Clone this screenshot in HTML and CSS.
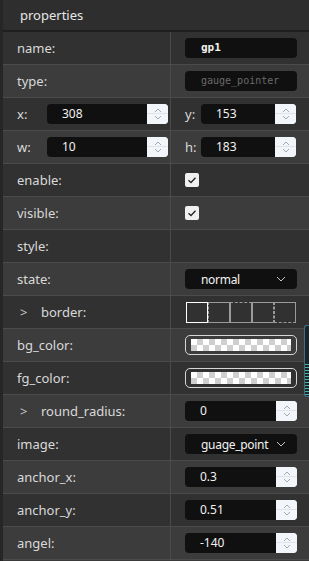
FILE: index.html
```html
<html lang="en">
<head>
    <meta charset="UTF-8">
    <meta name="viewport" content="width=device-width, initial-scale=1.0">
    <title>properties</title>
    <link rel="stylesheet" href="styles.css">
</head>
<body>
<div class="panel">
    <div class="header">properties</div>

    <div class="row dark">
        <div class="cell">name:</div>
        <div class="cell right"><div class="field mono">gp1</div></div>
    </div>
    <div class="row light">
        <div class="cell">type:</div>
        <div class="cell right"><div class="field mono muted">gauge_pointer</div></div>
    </div>
    <div class="row dark">
        <div class="cell pair">
            <span class="short">x:</span>
            <div class="spin wide"><span class="val">308</span><span class="btns"><svg width="10" height="14" viewBox="0 0 10 14"><path d="M2 5 L5 2 L8 5 M2 9 L5 12 L8 9" fill="none" stroke="#9aa0a8" stroke-width="0.9"/></svg></span></div>
        </div>
        <div class="cell right pair">
            <span class="short narrow">y:</span>
            <div class="spin mid"><span class="val">153</span><span class="btns"><svg width="10" height="14" viewBox="0 0 10 14"><path d="M2 5 L5 2 L8 5 M2 9 L5 12 L8 9" fill="none" stroke="#9aa0a8" stroke-width="0.9"/></svg></span></div>
        </div>
    </div>
    <div class="row light">
        <div class="cell pair">
            <span class="short">w:</span>
            <div class="spin wide"><span class="val">10</span><span class="btns"><svg width="10" height="14" viewBox="0 0 10 14"><path d="M2 5 L5 2 L8 5 M2 9 L5 12 L8 9" fill="none" stroke="#9aa0a8" stroke-width="0.9"/></svg></span></div>
        </div>
        <div class="cell right pair">
            <span class="short narrow">h:</span>
            <div class="spin mid"><span class="val">183</span><span class="btns"><svg width="10" height="14" viewBox="0 0 10 14"><path d="M2 5 L5 2 L8 5 M2 9 L5 12 L8 9" fill="none" stroke="#9aa0a8" stroke-width="0.9"/></svg></span></div>
        </div>
    </div>
    <div class="row dark">
        <div class="cell">enable:</div>
        <div class="cell right"><span class="check"><svg width="14" height="14" viewBox="0 0 14 14"><path d="M3.5 7.2 L6 9.5 L10.5 4.8" fill="none" stroke="#222" stroke-width="1.3"/></svg></span></div>
    </div>
    <div class="row light">
        <div class="cell">visible:</div>
        <div class="cell right"><span class="check"><svg width="14" height="14" viewBox="0 0 14 14"><path d="M3.5 7.2 L6 9.5 L10.5 4.8" fill="none" stroke="#222" stroke-width="1.3"/></svg></span></div>
    </div>
    <div class="row dark">
        <div class="cell">style:</div>
        <div class="cell right"></div>
    </div>
    <div class="row light">
        <div class="cell">state:</div>
        <div class="cell right"><div class="select"><span class="val">normal</span><svg width="10" height="6" viewBox="0 0 10 6"><path d="M1 1 L5 5 L9 1" fill="none" stroke="#c8c8c8" stroke-width="1"/></svg></div></div>
    </div>
    <div class="row dark">
        <div class="cell"><span class="arrow">&gt;</span>border:</div>
        <div class="cell right">
            <div class="borders">
                <span class="bx all"></span>
                <span class="bx left"></span>
                <span class="bx top"></span>
                <span class="bx rgt"></span>
                <span class="bx bot"></span>
            </div>
        </div>
    </div>
    <div class="row light">
        <div class="cell">bg_color:</div>
        <div class="cell right"><div class="color"><span class="checker"></span></div></div>
    </div>
    <div class="row dark">
        <div class="cell">fg_color:</div>
        <div class="cell right"><div class="color"><span class="checker"></span></div></div>
    </div>
    <div class="row light">
        <div class="cell"><span class="arrow">&gt;</span>round_radius:</div>
        <div class="cell right"><div class="spin full"><span class="val">0</span><span class="btns"><svg width="10" height="14" viewBox="0 0 10 14"><path d="M2 5 L5 2 L8 5 M2 9 L5 12 L8 9" fill="none" stroke="#9aa0a8" stroke-width="0.9"/></svg></span></div></div>
    </div>
    <div class="row dark">
        <div class="cell">image:</div>
        <div class="cell right"><div class="select"><span class="val">guage_point</span><svg width="10" height="6" viewBox="0 0 10 6"><path d="M1 1 L5 5 L9 1" fill="none" stroke="#c8c8c8" stroke-width="1"/></svg></div></div>
    </div>
    <div class="row light">
        <div class="cell">anchor_x:</div>
        <div class="cell right"><div class="spin full"><span class="val">0.3</span><span class="btns"><svg width="10" height="14" viewBox="0 0 10 14"><path d="M2 5 L5 2 L8 5 M2 9 L5 12 L8 9" fill="none" stroke="#9aa0a8" stroke-width="0.9"/></svg></span></div></div>
    </div>
    <div class="row dark">
        <div class="cell">anchor_y:</div>
        <div class="cell right"><div class="spin full"><span class="val">0.51</span><span class="btns"><svg width="10" height="14" viewBox="0 0 10 14"><path d="M2 5 L5 2 L8 5 M2 9 L5 12 L8 9" fill="none" stroke="#9aa0a8" stroke-width="0.9"/></svg></span></div></div>
    </div>
    <div class="row light">
        <div class="cell">angel:</div>
        <div class="cell right"><div class="spin full"><span class="val">-140</span><span class="btns"><svg width="10" height="14" viewBox="0 0 10 14"><path d="M2 5 L5 2 L8 5 M2 9 L5 12 L8 9" fill="none" stroke="#9aa0a8" stroke-width="0.9"/></svg></span></div></div>
    </div>

    <div class="slider"></div>
</div>
</body>
</html>
```

FILE: styles.css
```css
body { margin: 0; background-color: #3a3a3a; font-family: "Noto Sans", sans-serif; font-size: 13px; color: #d9d9d9; }
.panel { position: relative; width: 309px; height: 561px; overflow: hidden; border-left: 3px solid #262626; box-sizing: border-box; background-color: #3a3a3a; }
.header { height: 30px; line-height: 30px; padding-left: 17px; background-color: #2e2e2e; border-bottom: 2px solid #1f1f1f; color: #e6e6e6; }
.row { display: grid; grid-template-columns: 167px 1fr; height: 32px; border-bottom: 1px solid #4b4b4b; }
.row.dark { background-color: #313131; }
.row.light { background-color: #3c3c3c; }
.cell { display: flex; align-items: center; padding-left: 14px; }
.cell.right { border-left: 1px solid #4b4b4b; }
.short { width: 30px; flex: none; }
.short.narrow { width: 16px; }
.arrow { display: inline-block; width: 21px; padding-left: 3px; font-size: 13px; color: #c8c8c8; }

.field { width: 112px; height: 20px; line-height: 20px; box-sizing: border-box; padding-left: 16px; background-color: #101010; border-radius: 4px; color: #f2f2f2; }
.mono { font-family: "DejaVu Sans Mono", monospace; font-size: 11px; font-weight: bold; }
.muted { color: #6a6a6a; font-weight: normal; font-size: 10px; }

.spin { display: flex; flex: none; height: 20px; background-color: #101010; border-radius: 4px; overflow: hidden; color: #f2f2f2; font-size: 12px; }
.spin.wide { width: 121px; }
.spin.mid { width: 95px; }
.spin.full { width: 112px; }
.spin .val { flex: 1; line-height: 20px; padding-left: 15px; }
.btns { width: 21px; display: flex; align-items: center; justify-content: center; background-color: #f2f5f9; background-image: linear-gradient(#f2f5f9 9px, #dfe3ea 9px, #dfe3ea 10px, #f2f5f9 10px); }

.check { display: inline-block; width: 14px; height: 14px; background-color: #f0f0f0; border-radius: 2px; }
.check svg { display: block; }

.select { width: 112px; height: 20px; box-sizing: border-box; display: flex; align-items: center; padding: 0 11px 0 16px; background-color: #101010; border-radius: 4px; color: #f2f2f2; font-size: 12px; }
.select .val { flex: 1; white-space: nowrap; letter-spacing: -0.3px; }
.select svg { flex: none; }

.borders { display: flex; padding-left: 1px; }
.bx { width: 22px; height: 21px; box-sizing: border-box; border: 1px solid #9a9a9a; background-color: #313131; }
.bx.all { border-color: #ffffff; }
.bx.left { border-left-style: dashed; }
.bx.top { border-top-style: dashed; }
.bx.rgt { border-right-style: dashed; }
.bx.bot { border-bottom-style: dashed; border-left-style: dashed; }

.color { width: 112px; height: 20px; box-sizing: border-box; padding: 3px 5px; border: 1px solid #d6d6d6; border-radius: 5px; }
.checker { display: block; height: 12px; background-color: #ffffff; background-image: linear-gradient(45deg, #cfcfcf 25%, transparent 25%, transparent 75%, #cfcfcf 75%), linear-gradient(45deg, #cfcfcf 25%, transparent 25%, transparent 75%, #cfcfcf 75%); background-size: 12px 12px; background-position: 0 0, 6px 6px; }

.slider { position: absolute; left: 301px; top: 325px; width: 8px; height: 72px; box-sizing: border-box; border: 1px solid #3f6e86; border-right: none; border-radius: 3px 0 0 3px; background-color: #1d2428; background-image: repeating-linear-gradient(#1d2428 0, #1d2428 2px, #4fb3a0 2px, #4fb3a0 3px); background-size: 100% 36px; background-position: 0 36px; background-repeat: no-repeat; }
```
